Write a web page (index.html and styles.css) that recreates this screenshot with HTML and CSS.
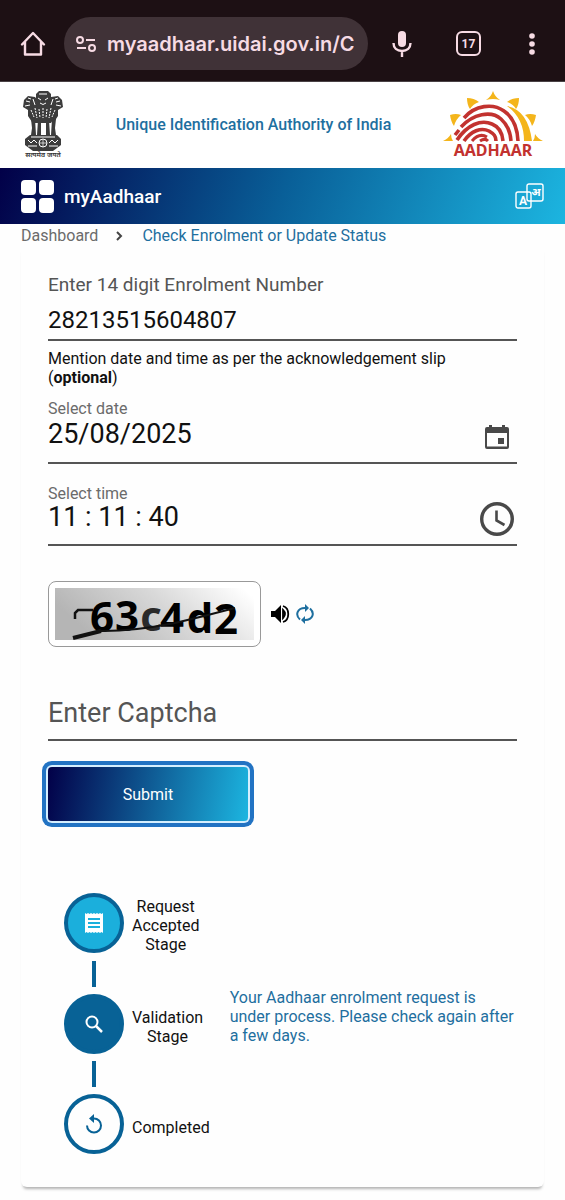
FILE: index.html
```html
<!DOCTYPE html>
<html lang="en">
<head>
    <meta charset="UTF-8">
    <meta name="viewport" content="width=device-width, initial-scale=1.0">
    <title>myAadhaar - Check Enrolment or Update Status</title>
    <link rel="stylesheet" href="styles.css">
</head>
<body>

    <!-- Browser bar -->
    <div class="browser-bar">
        <button class="bar-button" aria-label="Home">
            <svg width="26" height="26" viewBox="0 0 26 26" fill="none" stroke="#f7dbe4" stroke-width="2.4" stroke-linejoin="round" stroke-linecap="round"><path d="M2 13.500L13 2l11 11.500M5 11v12.500h16V11"/></svg>
        </button>
        <div class="address">
            <svg width="20" height="18" viewBox="0 0 20 18" fill="none" stroke="#f7dbe4" stroke-width="2"><circle cx="4" cy="5" r="3"/><path d="M10 5h9M1 13h9"/><circle cx="16" cy="13" r="3"/></svg>
            <span class="address-text">myaadhaar.uidai.gov.in/C</span>
        </div>
        <button class="bar-button" aria-label="Voice search">
            <svg width="20" height="28" viewBox="0 0 20 28"><rect x="6" y="1" width="8" height="16" rx="4" fill="#f7dbe4"/><path d="M1.500 13c0 5 3.500 8 8.500 8s8.500-3 8.500-8M10 21v6" fill="none" stroke="#f7dbe4" stroke-width="2.400"/></svg>
        </button>
        <button class="bar-button tabs" aria-label="Tabs">17</button>
        <button class="bar-button" aria-label="Menu">
            <svg width="6" height="24" viewBox="0 0 6 24" fill="#f7dbe4"><circle cx="3" cy="4" r="2.800"/><circle cx="3" cy="12" r="2.800"/><circle cx="3" cy="20" r="2.800"/></svg>
        </button>
    </div>

    <!-- Header -->
    <header class="header">
        <svg class="emblem" width="42" height="70" viewBox="0 0 42 70" role="img" aria-label="Emblem of India">
            <g fill="#3c3c3c">
                <path d="M14 4l3-3h9l3 3v8l-2 5H16l-2-5z"/>
                <path d="M13 7L6 6 2 10l-1 7 5 3v6l4 6 8-2V13z"/>
                <path d="M29 7l7-1 4 4 1 7-5 3v6l-4 6-8-2V13z"/>
                <path d="M11 17h20l2 9-4 7H13l-4-7z"/>
                <path d="M9 29h4l1 16H9l1-7zM16 30h3v15h-4zM24 30h3l1 15h-4zM30 29h4l-1 9 1 7h-5z"/>
                <path d="M8 45h27l4 4v6l-4 3-4 3H11l-4-3-4-3v-6z"/>
            </g>
            <g fill="none" stroke="#fff" stroke-width="1">
                <path d="M17 4h8M16 8l3 2M26 8l-3 2M18 13q3 3 6 0M4 11l4 1M3 16l5-1M38 11l-4 1M39 16l-5-1M11 9l2 6M31 9l-2 6M6 8l3 1M36 8l-3 1"/>
                <path d="M9 20l3 7M13 18l2 10M17 19l1 9M21 18v10M25 19l-1 9M29 18l-2 10M33 20l-3 7" stroke-dasharray="2 1"/>
                <path d="M6 50l3 3 3-3 3 3M27 53l3-3 3 3 3-3M6 56h9M27 56h9M9 47h24"/>
                <circle cx="21" cy="53" r="4"/>
                <path d="M21 49v8M17 53h8" stroke-width=".7"/>
            </g>
            <text class="motto" x="21" y="67" text-anchor="middle">सत्यमेव जयते</text>
        </svg>
        <p class="authority">Unique Identification Authority of India</p>
        <svg class="logo" width="100" height="70" viewBox="0 0 100 70" role="img" aria-label="Aadhaar">
            <g fill="#f4b51b">
                <path d="M43 10q5-3 7-9 2 6 7 9-7-2-14 0z"/>
                <path d="M24 8q7 0 12 4-6 2-9 7-3-4-3-11zM76 8q-7 0-12 4 6 2 9 7 3-4 3-11z"/>
                <path d="M7 25q6-2 11 0-5 4-7 11-3-4-4-11zM93 25q-6-2-11 0 5 4 7 11 3-4 4-11z"/>
                <path d="M0 51q5-2 8-7 0 4 2 7zM100 51q-5-2-8-7 0 4-2 7z"/>
                <path d="M64 16Q85 20 89 51h-8Q81 28 64 16z"/>
            </g>
            <g fill="none" stroke="#c2322f" stroke-width="3.600">
                <path d="M21 28C32 15 50 13 61 21q13 9 14 30"/>
                <path d="M18 37C30 24 48 20 58 29q9 8 10 22"/>
                <path d="M12 45l4-5M14 50C24 35 38 29 49 34q10 4 11 17"/>
                <path d="M21 51c7-10 17-14 25-10 5 3 7 5 7 10"/>
                <path d="M29 51c5-6 10-7 15-4M37 51c3-2 6-2 8 0" stroke-width="3"/>
            </g>
            <text class="logo-text" x="50" y="66" text-anchor="middle">AADHAAR</text>
        </svg>
    </header>

    <nav class="navbar">
        <a class="brand" href="#">
            <svg width="33" height="33" viewBox="0 0 33 33" fill="#fff"><rect width="15" height="15" rx="4"/><rect x="18" width="15" height="15" rx="4"/><rect y="18" width="15" height="15" rx="4"/><rect x="18" y="18" width="15" height="15" rx="4"/></svg>
            myAadhaar
        </a>
        <button class="language" aria-label="Change language">
            <svg width="30" height="26" viewBox="0 0 30 26" fill="none" stroke="#fff" stroke-width="1.400"><rect x="12" y="1" width="16" height="17" rx="2"/><rect x="1" y="9" width="15" height="16" rx="2"/><text class="lang-a" x="8" y="22" text-anchor="middle">A</text><text class="lang-hi" x="21" y="13" text-anchor="middle">अ</text></svg>
        </button>
    </nav>

    <main class="content">
        <div class="breadcrumb">
            <a href="#">Dashboard</a>
            <svg width="8" height="12" viewBox="0 0 8 12" fill="none" stroke="#444" stroke-width="2"><path d="M1 2l4 4-4 4"/></svg>
            <a class="current" href="#">Check Enrolment or Update Status</a>
        </div>

        <div class="card">
            <form class="form">
                <div class="field">
                    <label class="label-large" for="enrolment">Enter 14 digit Enrolment Number</label>
                    <input class="input-number" id="enrolment" type="text" value="28213515604807">
                </div>
                <p class="note">Mention date and time as per the acknowledgement slip (<b>optional</b>)</p>
                <div class="field field-icon field-date">
                    <div class="field-main">
                        <label for="date">Select date</label>
                        <input id="date" type="text" value="25/08/2025">
                    </div>
                    <svg class="icon-date" width="24" height="24" viewBox="0 0 24 24"><path d="M4 0h3v2h10V0h3v2h2q2 0 2 2v18q0 2-2 2H2q-2 0-2-2V4q0-2 2-2h2zM2 8v13.500h20V8z" fill="#494949" fill-rule="evenodd"/><rect x="13" y="13" width="6" height="6" fill="#494949"/></svg>
                </div>
                <div class="field field-icon field-time">
                    <div class="field-main">
                        <label for="time">Select time</label>
                        <input id="time" type="text" value="11 : 11 : 40">
                    </div>
                    <svg class="icon-time" width="34" height="34" viewBox="0 0 34 34" fill="none" stroke="#494949"><circle cx="17" cy="17" r="15.300" stroke-width="3.400"/><path d="M16.500 8.500v10l8 4.500" stroke-width="2.600"/></svg>
                </div>

                <div class="captcha-row">
                    <div class="captcha">
                        <svg width="199" height="52" viewBox="0 0 199 52" role="img" aria-label="Captcha">
                            <defs>
                                <linearGradient id="fade" x1="0" y1="0.3" x2="1" y2="0">
                                    <stop offset="0" stop-color="#b5b5b5"/>
                                    <stop offset=".5" stop-color="#d8d8d8"/>
                                    <stop offset=".95" stop-color="#fff"/>
                                </linearGradient>
                            </defs>
                            <rect width="199" height="52" fill="url(#fade)"/>
                            <g class="captcha-text" text-anchor="middle">
                                <text x="47" y="44">6</text>
                                <text x="72" y="43">3</text>
                                <text x="96" y="43" fill="#2a2a2a">c</text>
                                <text x="117" y="45">4</text>
                                <text x="145" y="45">d</text>
                                <text x="171" y="46">2</text>
                            </g>
                            <path d="M20 31v-6l3-3h15" fill="none" stroke="#111" stroke-width="2.500"/>
                            <path d="M42 43q32 1 78-8 30-7 60-15" fill="none" stroke="#111" stroke-width="2"/>
                            <path d="M18 50l28-7" stroke="#111" stroke-width="4"/>
                        </svg>
                    </div>
                    <button type="button" class="icon-button" aria-label="Play captcha">
                        <svg width="19" height="18" viewBox="0 0 19 18"><path d="M0 6h4l6-6v18l-6-6H0z"/><path d="M12 5q4 4 0 8zM12 1c7 2 7 14 0 16" fill="none" stroke="#000" stroke-width="1.800"/></svg>
                    </button>
                    <button type="button" class="icon-button" aria-label="Refresh captcha">
                        <svg width="18" height="20" viewBox="0 0 18 20" fill="none" stroke="#1e6f9f" stroke-width="2"><path d="M4 15.500C-1 11 1 4 9 4M14 4.500c5 4.500 3 11.500-5 11.500"/><path d="M9 0v8l4-4zM9 20v-8l-4 4z" fill="#1e6f9f" stroke="none"/></svg>
                    </button>
                </div>

                <input class="input-captcha" type="text" placeholder="Enter Captcha" aria-label="Enter Captcha">
                <button type="button" class="submit">Submit</button>
            </form>

            <div class="status">
                <ol class="steps">
                    <li class="step">
                        <span class="circle accepted">
                            <svg width="18" height="20" viewBox="0 0 18 20"><path d="M0 0l1.500 1L3 0l1.500 1L6 0l1.500 1L9 0l1.500 1L12 0l1.500 1L15 0l1.500 1L18 0v20l-1.500-1-1.500 1-1.500-1-1.500 1-1.500-1L9 20l-1.500-1L6 20l-1.500-1L3 20l-1.500-1L0 20z" fill="#fff"/><path d="M3 6h12M3 10h12M3 14h12" stroke="#1bafdc" stroke-width="1.800"/></svg>
                        </span>
                        <span class="step-name">Request Accepted Stage</span>
                    </li>
                    <li class="step">
                        <span class="circle validation">
                            <svg width="18" height="18" viewBox="0 0 18 18" fill="none" stroke="#fff" stroke-width="2"><circle cx="7" cy="7" r="5.500"/><path d="M11 11l6 6" stroke-width="2.500"/></svg>
                        </span>
                        <span class="step-name">Validation Stage</span>
                    </li>
                    <li class="step">
                        <span class="circle">
                            <svg width="18" height="20" viewBox="0 0 18 20"><path d="M2 11.500a7 7 0 1 0 7-7H7" fill="none" stroke="#086296" stroke-width="2"/><path d="M9 0v9L4 4.500z" fill="#086296"/></svg>
                        </span>
                        <span class="step-name">Completed</span>
                    </li>
                </ol>
                <p class="message">Your Aadhaar enrolment request is under process. Please check again after a few days.</p>
            </div>
        </div>
    </main>

</body>
</html>
```
FILE: styles.css
```css
* {
    box-sizing: border-box;
}
body {
    margin: 0;
    font-family: Roboto, "Noto Sans", sans-serif;
    font-size: 16px;
    line-height: 19px;
    color: #111;
    background-color: #fefefe;
}
button {
    font-family: inherit;
    border: none;
    background: none;
    padding: 0;
    cursor: pointer;
}
a {
    color: inherit;
    text-decoration: none;
}
svg {
    display: block;
    flex: none;
}

/* Browser bar */
.browser-bar {
    display: flex;
    align-items: center;
    height: 82px;
    padding: 6px 30px 0 20px;
    gap: 26px;
    background-color: #1d1014;
    border-bottom: 1px solid #4a4245;
}
.bar-button {
    flex: none;
}
.address {
    flex: 1;
    display: flex;
    align-items: center;
    gap: 11px;
    min-width: 0;
    height: 53px;
    margin: 0 -2px 0 -8px;
    padding: 0 6px 0 12px;
    border-radius: 27px;
    background-color: #403237;
}
.address-text {
    overflow: hidden;
    white-space: nowrap;
    font-family: Inter, sans-serif;
    font-size: 20px;
    line-height: 30px;
    font-weight: 600;
    color: #f7dbe4;
}
.tabs {
    width: 25px;
    height: 25px;
    margin: 0 22px 0 18px;
    border: 2px solid #f7dbe4;
    border-radius: 6px;
    font-size: 12px;
    font-weight: 700;
    color: #f7dbe4;
}

/* Header */
.header {
    display: flex;
    align-items: center;
    justify-content: space-between;
    height: 86px;
    padding: 0 22px;
    background-color: #fff;
}
.authority {
    margin: 0;
    padding-bottom: 2px;
    font-weight: 500;
    color: #1e6f9f;
}
.motto {
    font-family: "Noto Sans", sans-serif;
    font-size: 7px;
    font-weight: 600;
    fill: #333;
}
.logo-text {
    font-family: "Noto Sans", sans-serif;
    font-size: 16px;
    font-weight: 700;
    fill: #c2322f;
}
.navbar {
    display: flex;
    align-items: center;
    justify-content: space-between;
    height: 56px;
    padding: 0 20px 0 21px;
    background: linear-gradient(110deg, #020048 0%, #095f98 50%, #1cb5e0 100%);
}
.brand {
    display: flex;
    align-items: center;
    gap: 10px;
    font-size: 19px;
    font-weight: 500;
    color: #fff;
}
.lang-a {
    font-family: Roboto, sans-serif;
    font-size: 12px;
    font-weight: 700;
    fill: #fff;
    stroke: none;
}
.lang-hi {
    font-family: "Noto Sans", sans-serif;
    font-size: 11px;
    font-weight: 700;
    fill: #fff;
    stroke: none;
}

/* Page */
.content {
    padding: 2px 21px 13px;
}
.breadcrumb {
    display: flex;
    align-items: center;
    gap: 18px;
    color: #6b6b6b;
}
.breadcrumb .current {
    color: #1e6f9f;
}
.card {
    padding: 28px 27px 33px;
    border-radius: 6px;
    box-shadow: 0 4px 3px -2px rgba(0, 0, 0, 0.3);
}
.form {
    display: flex;
    flex-direction: column;
}
.field {
    display: flex;
    flex-direction: column;
}
label {
    display: block;
    color: #6b6b6b;
}
.label-large {
    font-size: 19px;
    line-height: 24px;
    color: #555;
}
input {
    width: 100%;
    min-width: 0;
    padding: 0;
    border: none;
    outline: none;
    background: none;
    font-family: inherit;
    font-size: 27px;
    line-height: 32px;
    color: #111;
}
.input-number {
    height: 44px;
    padding-top: 3px;
    border-bottom: 2px solid #555;
    font-size: 24px;
}
.note {
    margin: 8px 0 12px;
}
.field-icon {
    flex-direction: row;
    align-items: flex-end;
    border-bottom: 2px solid #555;
}
.field-main {
    flex: 1;
    align-self: flex-start;
}
.field-date {
    height: 65px;
}
.icon-date {
    margin: 0 8px 13px 0;
}
.field-time {
    height: 62px;
    margin-top: 20px;
}
.field-time input {
    height: 28px;
}
.icon-time {
    margin: 0 3px 8px 0;
}
.captcha-row {
    display: flex;
    align-items: center;
    gap: 6px;
    margin-top: 35px;
}
.captcha {
    margin-right: 4px;
    padding: 6px;
    border: 1px solid #999;
    border-radius: 8px;
    background-color: #fff;
}
.captcha-text {
    font-family: "Open Sans", sans-serif;
    font-size: 42px;
    font-weight: 700;
}
.input-captcha {
    height: 60px;
    margin-top: 34px;
    padding-top: 5px;
    border-bottom: 2px solid #555;
}
.input-captcha::placeholder {
    color: #555;
    opacity: 1;
}
.submit {
    width: 200px;
    height: 54px;
    margin: 26px 0 0;
    border-radius: 4px;
    box-shadow: 0 0 0 2px #d5efff, 0 0 0 6px #2273c3;
    background: linear-gradient(100deg, #020048, #1cb5e0);
    font-size: 16px;
    color: #fff;
}

/* Status */
.status {
    display: flex;
    align-items: center;
    gap: 20px;
    margin-top: 70px;
    padding-left: 16px;
}
.steps {
    margin: 0;
    padding: 0;
    list-style: none;
}
.step {
    display: grid;
    grid-template-columns: 60px auto;
    align-items: center;
    justify-items: start;
    column-gap: 8px;
}
.step:not(:last-child)::after {
    content: "";
    grid-column: 1;
    justify-self: center;
    width: 4px;
    height: 26px;
    margin: 7px 0;
    background-color: #086296;
}
.circle {
    display: flex;
    align-items: center;
    justify-content: center;
    width: 60px;
    height: 60px;
    border: 4px solid #086296;
    border-radius: 50%;
}
.accepted {
    background-color: #1bafdc;
}
.validation {
    background-color: #086296;
}
.step-name {
    width: min-content;
    padding-top: 6px;
    text-align: center;
}
.message {
    flex: 1;
    margin: 0;
    padding-bottom: 12px;
    color: #1e6f9f;
}
```
